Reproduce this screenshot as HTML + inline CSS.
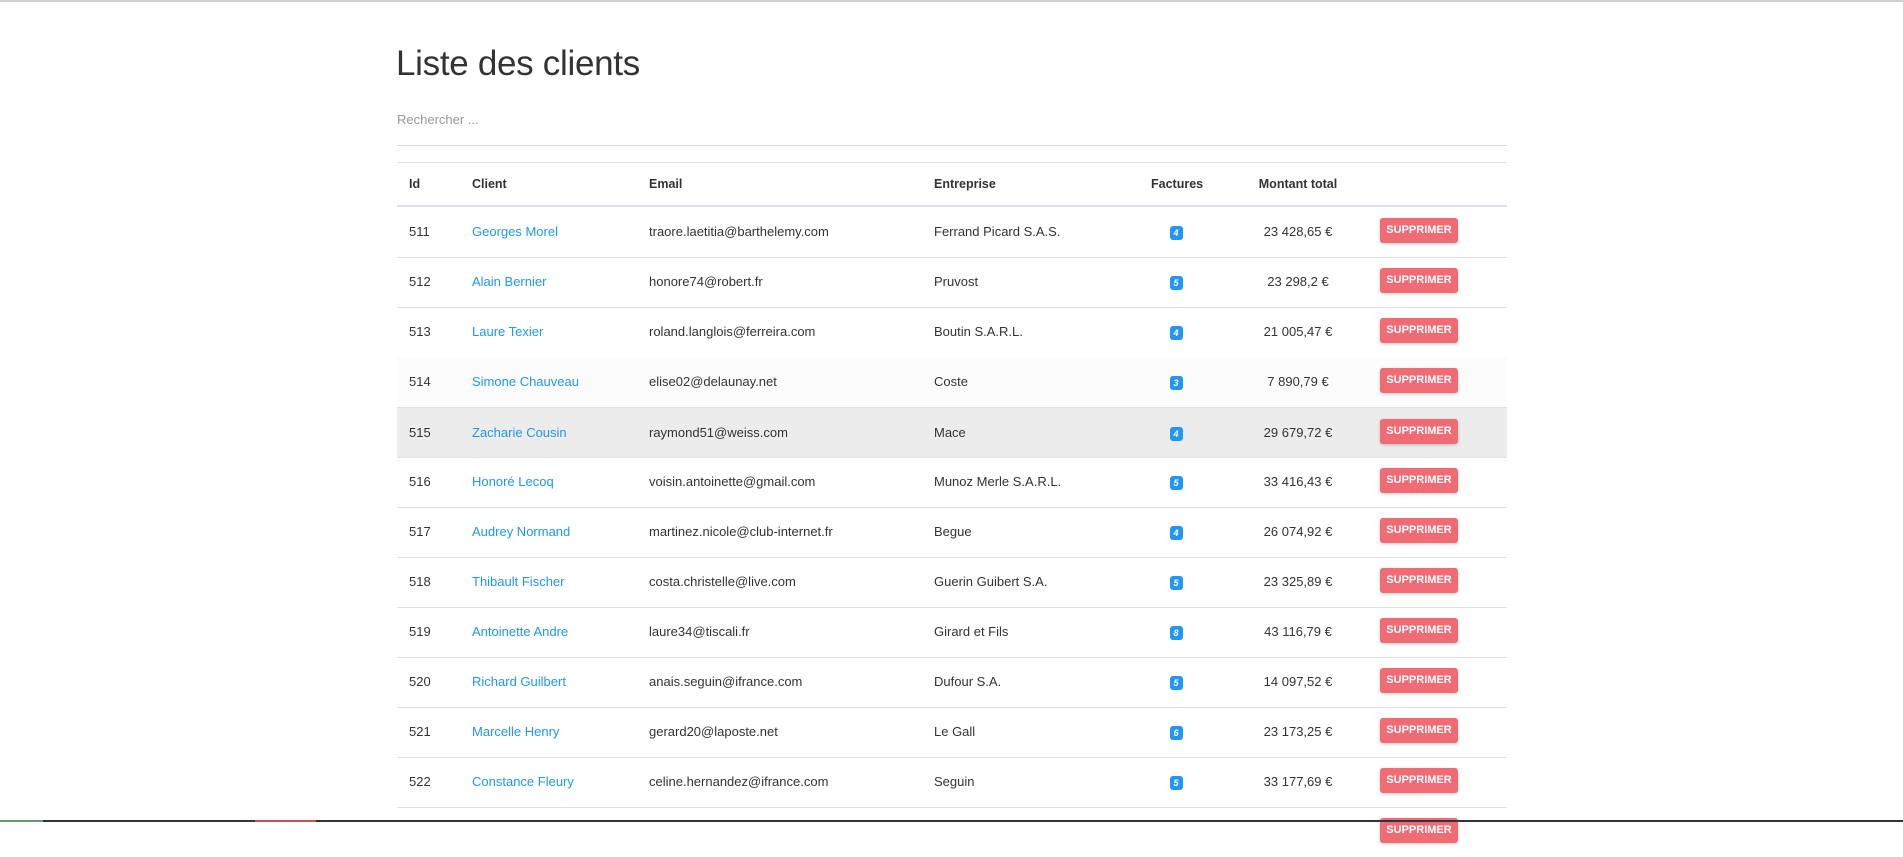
<!DOCTYPE html>
<html><head><meta charset="utf-8"><style>
body{margin:0;width:1903px;height:822px;overflow:hidden;background:#fff;font-family:"Liberation Sans",Roboto,sans-serif;color:#333;position:relative}
.top{position:absolute;left:0;top:0;width:1903px;height:2px;background:#d0d0d0}
.bot{position:absolute;left:0;top:820px;width:1903px;height:2px;background:#333}
h1{position:absolute;left:396px;top:44px;margin:0;font-size:35px;font-weight:500;color:#333;letter-spacing:-0.3px}
.search{position:absolute;left:397px;top:112px;font-size:13px;color:#999}
.sline{position:absolute;left:397px;top:145px;width:1110px;height:1px;background:#dcdcdc}
.hline{position:absolute;left:397px;width:1110px;height:1px;background:#dee2e6}
.row{position:absolute;left:397px;width:1110px;height:50px;font-size:13px}
.row span{position:absolute;top:0;line-height:50px;white-space:nowrap}
.hd span{font-weight:bold;font-size:12.5px;line-height:44px}
.c1{left:12px}.c2{left:75px}.c3{left:252px}.c4{left:537px}
.c5{left:754px;width:50px;text-align:center}
.c6{left:841px;width:120px;text-align:center}
a{color:#2196f3;text-decoration:none}
.b{display:inline-block;width:13px;height:14px;line-height:14px;background:#2196f3;color:#fff;font-size:9px;font-weight:bold;border-radius:3px;text-align:center;vertical-align:middle}
.btn{position:absolute;left:983px;top:11px;width:78px;height:25px;background:#f06b73;color:#fff;font-size:11px;font-weight:bold;text-align:center;line-height:25px;border-radius:3px;box-shadow:0 1px 3px rgba(0,0,0,.2)}
</style></head><body>
<div class="top"></div>
<h1>Liste des clients</h1>
<div class="search">Rechercher ...</div>
<div class="sline"></div>
<div class="hline" style="top:162px"></div>
<div class="row hd" style="top:162px;height:44px"><span class="c1">Id</span><span class="c2">Client</span><span class="c3">Email</span><span class="c4">Entreprise</span><span class="c5">Factures</span><span class="c6">Montant total</span></div>
<div class="hline" style="top:205px;height:2px"></div>

<div class="row" style="top:207px"><span class="c1">511</span><span class="c2"><a>Georges Morel</a></span><span class="c3">traore.laetitia@barthelemy.com</span><span class="c4">Ferrand Picard S.A.S.</span><span class="c5"><i class="b">4</i></span><span class="c6">23 428,65 €</span><div class="btn">SUPPRIMER</div></div>
<div class="hline" style="top:257px"></div>
<div class="row" style="top:257px"><span class="c1">512</span><span class="c2"><a>Alain Bernier</a></span><span class="c3">honore74@robert.fr</span><span class="c4">Pruvost</span><span class="c5"><i class="b">5</i></span><span class="c6">23 298,2 €</span><div class="btn">SUPPRIMER</div></div>
<div class="hline" style="top:307px"></div>
<div class="row" style="top:307px"><span class="c1">513</span><span class="c2"><a>Laure Texier</a></span><span class="c3">roland.langlois@ferreira.com</span><span class="c4">Boutin S.A.R.L.</span><span class="c5"><i class="b">4</i></span><span class="c6">21 005,47 €</span><div class="btn">SUPPRIMER</div></div>
<div class="hline" style="top:357px"></div>
<div class="row" style="top:357px;background:#fcfcfc"><span class="c1">514</span><span class="c2"><a>Simone Chauveau</a></span><span class="c3">elise02@delaunay.net</span><span class="c4">Coste</span><span class="c5"><i class="b">3</i></span><span class="c6">7 890,79 €</span><div class="btn">SUPPRIMER</div></div>
<div class="hline" style="top:407px"></div>
<div class="row" style="top:408px;background:#ececec"><span class="c1">515</span><span class="c2"><a>Zacharie Cousin</a></span><span class="c3">raymond51@weiss.com</span><span class="c4">Mace</span><span class="c5"><i class="b">4</i></span><span class="c6">29 679,72 €</span><div class="btn">SUPPRIMER</div></div>
<div class="hline" style="top:457px"></div>
<div class="row" style="top:457px"><span class="c1">516</span><span class="c2"><a>Honoré Lecoq</a></span><span class="c3">voisin.antoinette@gmail.com</span><span class="c4">Munoz Merle S.A.R.L.</span><span class="c5"><i class="b">5</i></span><span class="c6">33 416,43 €</span><div class="btn">SUPPRIMER</div></div>
<div class="hline" style="top:507px"></div>
<div class="row" style="top:507px"><span class="c1">517</span><span class="c2"><a>Audrey Normand</a></span><span class="c3">martinez.nicole@club-internet.fr</span><span class="c4">Begue</span><span class="c5"><i class="b">4</i></span><span class="c6">26 074,92 €</span><div class="btn">SUPPRIMER</div></div>
<div class="hline" style="top:557px"></div>
<div class="row" style="top:557px"><span class="c1">518</span><span class="c2"><a>Thibault Fischer</a></span><span class="c3">costa.christelle@live.com</span><span class="c4">Guerin Guibert S.A.</span><span class="c5"><i class="b">5</i></span><span class="c6">23 325,89 €</span><div class="btn">SUPPRIMER</div></div>
<div class="hline" style="top:607px"></div>
<div class="row" style="top:607px"><span class="c1">519</span><span class="c2"><a>Antoinette Andre</a></span><span class="c3">laure34@tiscali.fr</span><span class="c4">Girard et Fils</span><span class="c5"><i class="b">8</i></span><span class="c6">43 116,79 €</span><div class="btn">SUPPRIMER</div></div>
<div class="hline" style="top:657px"></div>
<div class="row" style="top:657px"><span class="c1">520</span><span class="c2"><a>Richard Guilbert</a></span><span class="c3">anais.seguin@ifrance.com</span><span class="c4">Dufour S.A.</span><span class="c5"><i class="b">5</i></span><span class="c6">14 097,52 €</span><div class="btn">SUPPRIMER</div></div>
<div class="hline" style="top:707px"></div>
<div class="row" style="top:707px"><span class="c1">521</span><span class="c2"><a>Marcelle Henry</a></span><span class="c3">gerard20@laposte.net</span><span class="c4">Le Gall</span><span class="c5"><i class="b">6</i></span><span class="c6">23 173,25 €</span><div class="btn">SUPPRIMER</div></div>
<div class="hline" style="top:757px"></div>
<div class="row" style="top:757px"><span class="c1">522</span><span class="c2"><a>Constance Fleury</a></span><span class="c3">celine.hernandez@ifrance.com</span><span class="c4">Seguin</span><span class="c5"><i class="b">5</i></span><span class="c6">33 177,69 €</span><div class="btn">SUPPRIMER</div></div>
<div class="hline" style="top:807px"></div>
<div class="row" style="top:807px"><div class="btn">SUPPRIMER</div></div>
<div class="bot"></div>
<div style="position:absolute;left:0;top:820px;width:43px;height:2px;background:#6a9a6a"></div>
<div style="position:absolute;left:255px;top:820px;width:61px;height:2px;background:#c05555"></div>
</body></html>
